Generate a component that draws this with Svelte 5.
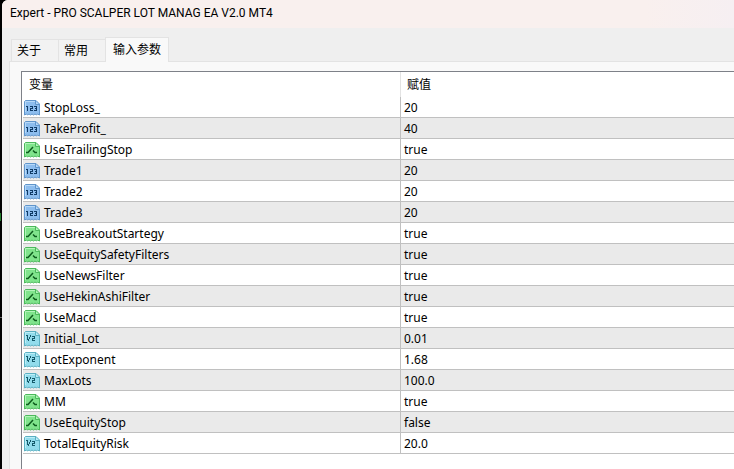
<script lang="ts">
  type Kind = "int" | "bool" | "double";
  type Param = { name: string; value: string; kind: Kind };

  const tabs = ["关于", "常用", "输入参数"];
  let active = $state(2);

  const params: Param[] = [
    { name: "StopLoss_", value: "20", kind: "int" },
    { name: "TakeProfit_", value: "40", kind: "int" },
    { name: "UseTrailingStop", value: "true", kind: "bool" },
    { name: "Trade1", value: "20", kind: "int" },
    { name: "Trade2", value: "20", kind: "int" },
    { name: "Trade3", value: "20", kind: "int" },
    { name: "UseBreakoutStartegy", value: "true", kind: "bool" },
    { name: "UseEquitySafetyFilters", value: "true", kind: "bool" },
    { name: "UseNewsFilter", value: "true", kind: "bool" },
    { name: "UseHekinAshiFilter", value: "true", kind: "bool" },
    { name: "UseMacd", value: "true", kind: "bool" },
    { name: "Initial_Lot", value: "0.01", kind: "double" },
    { name: "LotExponent", value: "1.68", kind: "double" },
    { name: "MaxLots", value: "100.0", kind: "double" },
    { name: "MM", value: "true", kind: "bool" },
    { name: "UseEquityStop", value: "false", kind: "bool" },
    { name: "TotalEquityRisk", value: "20.0", kind: "double" },
  ];
</script>

{#snippet icon(kind: Kind)}
  <svg class="icon {kind}" width="16" height="16" viewBox="0 0 16 16" aria-hidden="true">
    <path
      class="sheet"
      d="M1.5.5H12L15.5 4V15L13.5 14L12.5 15L11 14L9.5 15L8 14L6.5 15L5 14L3.5 15L2.5 14L.5 15V1.5Z"
    />
    <path class="shine" d="M1.5 12V1.5H11" />
    <path class="fold" d="M11.5 1V4.5H15" />
    {#if kind === "int"}
      <path
        class="glyph"
        d="M2 6H4V11H3V7H2ZM6 6H9V9H7V10H9V11H6V8H8V7H6ZM10 6H13V11H10V10H12V9H11V8H12V7H10Z"
      />
    {:else if kind === "bool"}
      <path class="stroke" d="M2 10.5H4L9 5M9 8.5L11 10.5H13" />
    {:else}
      <path
        class="glyph"
        d="M2 4H4V9H3V5H2ZM6 4H7V6H6V8H5V10H4V8H5V6H6ZM8 5H11V8H9V9H11V10H8V7H10V6H8Z"
      />
    {/if}
  </svg>
{/snippet}

<div class="desktop">
  <main class="dialog">
    <header class="titlebar">
      <h1>Expert - PRO SCALPER LOT MANAG EA V2.0 MT4</h1>
    </header>

    <div class="tabs" role="tablist">
      {#each tabs as tab, i}
        <button
          type="button"
          role="tab"
          class="tab"
          class:active={active === i}
          aria-selected={active === i}
          onclick={() => (active = i)}>{tab}</button
        >
      {/each}
    </div>

    <section class="panel" role="tabpanel">
      <div class="list">
        <table>
          <thead>
            <tr>
              <th class="name">变量</th>
              <th>赋值</th>
            </tr>
          </thead>
          <tbody>
            {#each params as param}
              <tr>
                <td class="name">
                  <span class="label">{@render icon(param.kind)}{param.name}</span>
                </td>
                <td>{param.value}</td>
              </tr>
            {/each}
          </tbody>
        </table>
      </div>
    </section>
  </main>
</div>

<style>
  :global(body) {
    background: #000;
  }

  .desktop {
    box-sizing: border-box;
    min-height: 100vh;
    padding-left: 2px;
    display: flex;
    background:
      linear-gradient(#1f7a2a, #1f7a2a) 0 213px / 1px 8px no-repeat,
      linear-gradient(#666, #666) 0 317px / 2px 1px no-repeat,
      #000;
    font-family: "Noto Sans", "Noto Sans CJK SC", sans-serif;
    font-size: 12px;
    color: #000;
  }

  .dialog {
    flex: 1;
    min-width: 0;
    display: flex;
    flex-direction: column;
    background: #efefef;
    border-top-left-radius: 6px;
    overflow: hidden;
  }

  .titlebar {
    height: 28px;
    padding-left: 8px;
    background: linear-gradient(90deg, #f9f0ee 88%, #f6eff2);
  }

  h1 {
    margin: 0;
    font-family: Roboto, "Noto Sans", sans-serif;
    font-size: 12px;
    font-weight: 400;
    line-height: 26px;
    white-space: nowrap;
  }

  .tabs {
    display: flex;
    align-items: flex-end;
    height: 24px;
    margin: 9px 0 0 9px;
  }

  .tab {
    height: 22px;
    width: 47px;
    padding: 0 0 0 5px;
    border: 1px solid #e3e3e3;
    border-width: 1px 0 0 1px;
    background: #f2f2f2;
    font: inherit;
    line-height: 20px;
    color: inherit;
    text-align: left;
  }

  .tab.active {
    z-index: 1;
    height: 25px;
    width: 64px;
    margin-bottom: -1px;
    padding-left: 7px;
    border-right-width: 1px;
    background: #f9f9f9;
  }

  .panel {
    flex: 1;
    display: flex;
    margin-left: 7px;
    padding: 9px 0 0 11px;
    border: 1px solid #e3e3e3;
    border-width: 1px 0 0 1px;
    background: #f9f9f9;
  }

  .list {
    flex: 1;
    padding-left: 1px;
    border: 1px solid #7e8188;
    border-width: 1px 0 0 1px;
    background: #fff;
  }

  table {
    width: 100%;
    table-layout: fixed;
    border-collapse: separate;
    border-spacing: 0;
  }

  th {
    height: 25px;
    padding: 0 0 0 6px;
    font-weight: 400;
    line-height: 24px;
    text-align: left;
  }

  th.name {
    width: 371px;
    border-right: 1px solid #e3e3e3;
  }

  td {
    height: 18px;
    padding: 2px 0 0 3px;
    border-bottom: 1px solid #c0c0c0;
    line-height: 18px;
  }

  td.name {
    padding-left: 1px;
    border-right: 1px solid #c0c0c0;
  }

  tbody tr:nth-child(even) {
    background: #eaeaea;
  }

  .label {
    display: flex;
    align-items: center;
    gap: 4px;
  }

  .icon {
    flex: none;
    fill: none;
  }

  .int {
    --edge: #6095cb;
    --paper: #8dbdee;
    --light: #b8d9f8;
    --ink: #0f3a66;
  }

  .bool {
    --edge: #4cb95c;
    --paper: #80e48c;
    --light: #b4f5bb;
    --ink: #0d5c1d;
  }

  .double {
    --edge: #5bb0c2;
    --paper: #92dcec;
    --light: #bdeef7;
    --ink: #14596a;
  }

  .sheet {
    fill: var(--paper);
    stroke: var(--edge);
  }

  .shine {
    stroke: var(--light);
  }

  .fold {
    fill: var(--light);
    stroke: var(--edge);
  }

  .glyph {
    fill: var(--ink);
    shape-rendering: crispEdges;
  }

  .stroke {
    stroke: var(--ink);
    stroke-width: 1.5;
  }
</style>
